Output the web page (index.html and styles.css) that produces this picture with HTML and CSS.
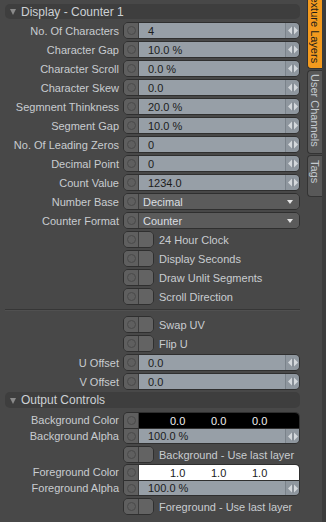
FILE: index.html
```html
<!DOCTYPE html>
<html>
<head>
<meta charset="utf-8">
<link rel="stylesheet" href="styles.css">
</head>
<body>
<div class="app">
  <div class="panel">
    <div class="section-head"><span class="tri"></span>Display - Counter 1</div>

    <div class="row"><span class="lbl">No. Of Characters</span><div class="field"><span class="btn"><i></i></span><span class="val">4</span><span class="spin"><svg width="12" height="9" viewBox="0 0 12 9"><path d="M5 0.5 L1 4.5 L5 8.5Z M7 0.5 L11 4.5 L7 8.5Z" fill="#d4d8dc"/><rect x="5.6" y="0" width="0.8" height="9" fill="#7d858d"/></svg></span></div></div>
    <div class="row"><span class="lbl">Character Gap</span><div class="field"><span class="btn"><i></i></span><span class="val">10.0 %</span><span class="spin"><svg width="12" height="9" viewBox="0 0 12 9"><path d="M5 0.5 L1 4.5 L5 8.5Z M7 0.5 L11 4.5 L7 8.5Z" fill="#d4d8dc"/><rect x="5.6" y="0" width="0.8" height="9" fill="#7d858d"/></svg></span></div></div>
    <div class="row"><span class="lbl">Character Scroll</span><div class="field"><span class="btn"><i></i></span><span class="val">0.0 %</span><span class="spin"><svg width="12" height="9" viewBox="0 0 12 9"><path d="M5 0.5 L1 4.5 L5 8.5Z M7 0.5 L11 4.5 L7 8.5Z" fill="#d4d8dc"/><rect x="5.6" y="0" width="0.8" height="9" fill="#7d858d"/></svg></span></div></div>
    <div class="row"><span class="lbl">Character Skew</span><div class="field"><span class="btn"><i></i></span><span class="val">0.0</span><span class="spin"><svg width="12" height="9" viewBox="0 0 12 9"><path d="M5 0.5 L1 4.5 L5 8.5Z M7 0.5 L11 4.5 L7 8.5Z" fill="#d4d8dc"/><rect x="5.6" y="0" width="0.8" height="9" fill="#7d858d"/></svg></span></div></div>
    <div class="row"><span class="lbl">Segmnent Thinkness</span><div class="field"><span class="btn"><i></i></span><span class="val">20.0 %</span><span class="spin"><svg width="12" height="9" viewBox="0 0 12 9"><path d="M5 0.5 L1 4.5 L5 8.5Z M7 0.5 L11 4.5 L7 8.5Z" fill="#d4d8dc"/><rect x="5.6" y="0" width="0.8" height="9" fill="#7d858d"/></svg></span></div></div>
    <div class="row"><span class="lbl">Segment Gap</span><div class="field"><span class="btn"><i></i></span><span class="val">10.0 %</span><span class="spin"><svg width="12" height="9" viewBox="0 0 12 9"><path d="M5 0.5 L1 4.5 L5 8.5Z M7 0.5 L11 4.5 L7 8.5Z" fill="#d4d8dc"/><rect x="5.6" y="0" width="0.8" height="9" fill="#7d858d"/></svg></span></div></div>
    <div class="row"><span class="lbl">No. Of Leading Zeros</span><div class="field"><span class="btn"><i></i></span><span class="val">0</span><span class="spin"><svg width="12" height="9" viewBox="0 0 12 9"><path d="M5 0.5 L1 4.5 L5 8.5Z M7 0.5 L11 4.5 L7 8.5Z" fill="#d4d8dc"/><rect x="5.6" y="0" width="0.8" height="9" fill="#7d858d"/></svg></span></div></div>
    <div class="row"><span class="lbl">Decimal Point</span><div class="field"><span class="btn"><i></i></span><span class="val">0</span><span class="spin"><svg width="12" height="9" viewBox="0 0 12 9"><path d="M5 0.5 L1 4.5 L5 8.5Z M7 0.5 L11 4.5 L7 8.5Z" fill="#d4d8dc"/><rect x="5.6" y="0" width="0.8" height="9" fill="#7d858d"/></svg></span></div></div>
    <div class="row"><span class="lbl">Count Value</span><div class="field"><span class="btn"><i></i></span><span class="val">1234.0</span><span class="spin"><svg width="12" height="9" viewBox="0 0 12 9"><path d="M5 0.5 L1 4.5 L5 8.5Z M7 0.5 L11 4.5 L7 8.5Z" fill="#d4d8dc"/><rect x="5.6" y="0" width="0.8" height="9" fill="#7d858d"/></svg></span></div></div>
    <div class="row"><span class="lbl">Number Base</span><div class="field"><span class="btn"><i></i></span><span class="dd">Decimal<b></b></span></div></div>
    <div class="row"><span class="lbl">Counter Format</span><div class="field"><span class="btn"><i></i></span><span class="dd">Counter<b></b></span></div></div>
    <div class="row"><span class="lbl"></span><div class="toggle"><span class="btn"><i></i></span><span class="box"></span></div><span class="clbl">24 Hour Clock</span></div>
    <div class="row"><span class="lbl"></span><div class="toggle"><span class="btn"><i></i></span><span class="box"></span></div><span class="clbl">Display Seconds</span></div>
    <div class="row"><span class="lbl"></span><div class="toggle"><span class="btn"><i></i></span><span class="box"></span></div><span class="clbl">Draw Unlit Segments</span></div>
    <div class="row"><span class="lbl"></span><div class="toggle"><span class="btn"><i></i></span><span class="box"></span></div><span class="clbl">Scroll Direction</span></div>

    <div class="sep"></div>

    <div class="row"><span class="lbl"></span><div class="toggle"><span class="btn"><i></i></span><span class="box"></span></div><span class="clbl">Swap UV</span></div>
    <div class="row"><span class="lbl"></span><div class="toggle"><span class="btn"><i></i></span><span class="box"></span></div><span class="clbl">Flip U</span></div>
    <div class="row"><span class="lbl">U Offset</span><div class="field"><span class="btn"><i></i></span><span class="val">0.0</span><span class="spin"><svg width="12" height="9" viewBox="0 0 12 9"><path d="M5 0.5 L1 4.5 L5 8.5Z M7 0.5 L11 4.5 L7 8.5Z" fill="#d4d8dc"/><rect x="5.6" y="0" width="0.8" height="9" fill="#7d858d"/></svg></span></div></div>
    <div class="row"><span class="lbl">V Offset</span><div class="field"><span class="btn"><i></i></span><span class="val">0.0</span><span class="spin"><svg width="12" height="9" viewBox="0 0 12 9"><path d="M5 0.5 L1 4.5 L5 8.5Z M7 0.5 L11 4.5 L7 8.5Z" fill="#d4d8dc"/><rect x="5.6" y="0" width="0.8" height="9" fill="#7d858d"/></svg></span></div></div>

    <div class="section-head out"><span class="tri"></span>Output Controls</div>

    <div class="row crow"><span class="lbl">Background Color</span><div class="field ctop"><span class="btn"><i></i></span><span class="cval black"><span>0.0</span><span>0.0</span><span>0.0</span></span></div></div>
    <div class="row crow"><span class="lbl">Background Alpha</span><div class="field cbot"><span class="btn"><i></i></span><span class="val">100.0 %</span><span class="spin"><svg width="12" height="9" viewBox="0 0 12 9"><path d="M5 0.5 L1 4.5 L5 8.5Z M7 0.5 L11 4.5 L7 8.5Z" fill="#d4d8dc"/><rect x="5.6" y="0" width="0.8" height="9" fill="#7d858d"/></svg></span></div></div>
    <div class="row after"><span class="lbl"></span><div class="toggle"><span class="btn"><i></i></span><span class="box"></span></div><span class="clbl">Background - Use last layer</span></div>
    <div class="row crow"><span class="lbl">Foreground Color</span><div class="field ctop"><span class="btn"><i></i></span><span class="cval white"><span>1.0</span><span>1.0</span><span>1.0</span></span></div></div>
    <div class="row crow"><span class="lbl">Foreground Alpha</span><div class="field cbot"><span class="btn"><i></i></span><span class="val">100.0 %</span><span class="spin"><svg width="12" height="9" viewBox="0 0 12 9"><path d="M5 0.5 L1 4.5 L5 8.5Z M7 0.5 L11 4.5 L7 8.5Z" fill="#d4d8dc"/><rect x="5.6" y="0" width="0.8" height="9" fill="#7d858d"/></svg></span></div></div>
    <div class="row after"><span class="lbl"></span><div class="toggle"><span class="btn"><i></i></span><span class="box"></span></div><span class="clbl">Foreground - Use last layer</span></div>
  </div>

  <div class="tabs">
    <div class="tab active"><span>Texture Layers</span></div>
    <div class="tab uc"><span>User Channels</span></div>
    <div class="tab tags"><span>Tags</span></div>
  </div>
</div>
</body>
</html>
```

FILE: styles.css
```css
html, body {
  margin: 0;
  padding: 0;
  background: #484848;
}
body {
  font-family: "Liberation Sans", Arial, sans-serif;
  font-size: 11px;
  color: #c8ccd0;
}
.app {
  display: flex;
  width: 326px;
  height: 522px;
  overflow: hidden;
}
.panel {
  width: 305px;
  box-sizing: border-box;
  padding: 4px 5px 0 5px;
  display: flex;
  flex-direction: column;
}
.section-head {
  height: 15px;
  margin-bottom: 2px;
  background: #3e3e3e;
  border-radius: 5px;
  display: flex;
  align-items: center;
  font-size: 12px;
  color: #cdd1d5;
  padding-left: 5px;
}
.section-head.out {
  height: 16px;
  margin-top: 1px;
  margin-bottom: 4px;
}
.tri {
  width: 0;
  height: 0;
  border-left: 3px solid transparent;
  border-right: 3px solid transparent;
  border-top: 6px solid #8a8a8a;
  margin-right: 5px;
  margin-top: 1px;
}
.row {
  height: 19px;
  display: flex;
  align-items: center;
  flex-shrink: 0;
}
.row.crow {
  height: 16px;
}
.row.after {
  margin-top: 1px;
}
.lbl {
  width: 114px;
  text-align: right;
  margin-right: 4px;
  white-space: nowrap;
  flex-shrink: 0;
}
.field {
  width: 177px;
  height: 17px;
  box-sizing: border-box;
  border: 1px solid #2f2f2f;
  border-radius: 5px;
  display: flex;
  overflow: hidden;
}
.field.ctop {
  height: 16px;
  border-radius: 5px 5px 0 0;
  border-bottom: none;
}
.field.cbot {
  height: 16px;
  border-radius: 0 0 5px 5px;
}
.btn {
  width: 14px;
  flex-shrink: 0;
  background: #5f5f5f;
  border-right: 1px solid #3c3c3c;
  display: flex;
  align-items: center;
  justify-content: center;
}
.btn i {
  display: block;
  width: 9px;
  height: 9px;
  box-sizing: border-box;
  border: 1px solid #4a4a4a;
  border-radius: 50%;
}
.val {
  flex: 1;
  background: #979fa7;
  color: #1c1c1c;
  padding-left: 9px;
  display: flex;
  align-items: center;
}
.spin {
  width: 13px;
  flex-shrink: 0;
  background: #8f979f;
  border-left: 1px solid #7a828a;
  display: flex;
  align-items: center;
  justify-content: center;
}
.dd {
  flex: 1;
  position: relative;
  background: #5b5b5b;
  color: #dcdfe2;
  padding-left: 4px;
  display: flex;
  align-items: center;
}
.dd b {
  position: absolute;
  right: 6px;
  top: 6px;
  width: 0;
  height: 0;
  border-left: 3.5px solid transparent;
  border-right: 3.5px solid transparent;
  border-top: 4px solid #e4e4e4;
}
.cval {
  flex: 1;
  display: flex;
  align-items: center;
  padding-left: 31px;
}
.cval span {
  width: 41px;
}
.cval.black {
  background: #000;
  color: #f0f0f0;
}
.cval.white {
  background: #fff;
  color: #1a1a1a;
}
.toggle {
  width: 31px;
  height: 17px;
  box-sizing: border-box;
  border: 1px solid #2f2f2f;
  border-radius: 5px;
  display: flex;
  overflow: hidden;
  flex-shrink: 0;
}
.toggle .box {
  flex: 1;
  background: #636363;
}
.clbl {
  margin-left: 5px;
  white-space: nowrap;
}
.sep {
  height: 1px;
  background: #363636;
  border-bottom: 1px solid #505050;
  margin: 3px 0 4px;
  flex-shrink: 0;
}
.tabs {
  width: 21px;
  box-sizing: border-box;
  padding-left: 2px;
  border-right: 4px solid #3c3c3c;
  display: flex;
  flex-direction: column;
}
.tab {
  writing-mode: vertical-rl;
  overflow: hidden;
  box-sizing: border-box;
  border: 1px solid #333;
  border-right: none;
  background: #585858;
  color: #c4cad0;
  display: flex;
  align-items: center;
  white-space: nowrap;
  flex-shrink: 0;
}
.tab.active {
  height: 69px;
  background: #f39a1e;
  color: #1a1a1a;
  border-top: none;
  justify-content: flex-end;
  padding-bottom: 5px;
  border-radius: 0 0 0 4px;
}
.tab.uc {
  height: 84px;
  margin-top: 1px;
  padding-top: 3px;
  border-radius: 4px 0 0 4px;
}
.tab.tags {
  height: 42px;
  margin-top: 1px;
  padding-top: 4px;
  border-radius: 4px 0 0 4px;
}
```
